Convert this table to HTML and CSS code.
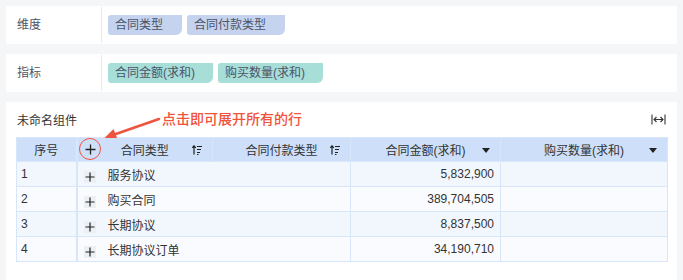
FILE: index.html
```html
<!DOCTYPE html>
<html lang="zh">
<head>
<meta charset="utf-8">
<link rel="stylesheet" href="styles.css">
</head>
<body>
<div class="page">
  <div class="panel">
    <div class="label">维度</div>
    <div class="tags">
      <span class="tag dim">合同类型</span>
      <span class="tag dim">合同付款类型</span>
    </div>
  </div>
  <div class="panel">
    <div class="label">指标</div>
    <div class="tags">
      <span class="tag met">合同金额(求和)</span>
      <span class="tag met">购买数量(求和)</span>
    </div>
  </div>
  <div class="widget">
    <div class="wtitle">
      <span>未命名组件</span>
      <svg class="fit" width="15" height="11" viewBox="0 0 15 11"><path d="M1 0.5v10M14 0.5v10M3 5.5h9M5.5 3l-2.5 2.5 2.5 2.5M9.5 3l2.5 2.5-2.5 2.5" fill="none" stroke="#333" stroke-width="1.1"/></svg>
    </div>
    <div class="note">点击即可展开所有的行</div>
    <svg class="arrow" width="70" height="30" viewBox="0 0 70 30"><path d="M58 6 L12 22" stroke="#ee5540" stroke-width="2.6" fill="none" stroke-linecap="round"/><path d="M2 26.5 L12.5 16 L16.5 26 Z" fill="#ee5540"/></svg>
    <table class="grid">
      <colgroup><col class="c1"><col class="c2"><col class="c3"><col class="c4"><col class="c5"></colgroup>
      <thead>
        <tr>
          <th class="first">序号</th>
          <th class="rel"><svg class="hplus" width="11" height="11" viewBox="0 0 11 11"><path d="M5.5 0.5v10M0.5 5.5h10" stroke="#222" stroke-width="1.3"/></svg><span class="ring"></span>合同类型<svg class="sort" width="10" height="10" viewBox="0 0 10 10"><path d="M2 9.5V1M0.2 2.8L2 0.8 3.8 2.8M5 1.5h5M5 4.5h4M5 7.5h3M5 9.5h1.5" fill="none" stroke="#222" stroke-width="1.2"/></svg></th>
          <th class="rel">合同付款类型<svg class="sort" width="10" height="10" viewBox="0 0 10 10"><path d="M2 9.5V1M0.2 2.8L2 0.8 3.8 2.8M5 1.5h5M5 4.5h4M5 7.5h3M5 9.5h1.5" fill="none" stroke="#222" stroke-width="1.2"/></svg></th>
          <th class="rel">合同金额(求和)<svg class="tri" width="8" height="5" viewBox="0 0 8 5"><path d="M0 0h8L4 5z" fill="#222"/></svg></th>
          <th class="rel">购买数量(求和)<svg class="tri" width="8" height="5" viewBox="0 0 8 5"><path d="M0 0h8L4 5z" fill="#222"/></svg></th>
        </tr>
      </thead>
      <tbody>
        <tr class="odd"><td class="first">1</td><td colspan="2"><span class="plus"><svg width="10" height="10" viewBox="0 0 10 10"><path d="M5 0.5v9M0.5 5h9" stroke="#222" stroke-width="1.2"/></svg></span>服务协议</td><td class="num">5,832,900</td><td></td></tr>
        <tr class="even"><td class="first">2</td><td colspan="2"><span class="plus"><svg width="10" height="10" viewBox="0 0 10 10"><path d="M5 0.5v9M0.5 5h9" stroke="#222" stroke-width="1.2"/></svg></span>购买合同</td><td class="num">389,704,505</td><td></td></tr>
        <tr class="odd"><td class="first">3</td><td colspan="2"><span class="plus"><svg width="10" height="10" viewBox="0 0 10 10"><path d="M5 0.5v9M0.5 5h9" stroke="#222" stroke-width="1.2"/></svg></span>长期协议</td><td class="num">8,837,500</td><td></td></tr>
        <tr class="even"><td class="first">4</td><td colspan="2"><span class="plus"><svg width="10" height="10" viewBox="0 0 10 10"><path d="M5 0.5v9M0.5 5h9" stroke="#222" stroke-width="1.2"/></svg></span>长期协议订单</td><td class="num">34,190,710</td><td></td></tr>
      </tbody>
    </table>
  </div>
</div>
</body>
</html>
```
FILE: styles.css
```css
html, body {
  margin: 0;
  background: #f5f6f8;
  font-family: "Liberation Sans", "Noto Sans CJK SC", sans-serif;
  font-size: 12px;
  color: #333;
}
.page {
  padding: 6px 6px 0 6px;
  display: flex;
  flex-direction: column;
  gap: 10px;
}
.panel {
  background: #fff;
  height: 38px;
  display: flex;
  align-items: center;
}
.label {
  width: 84px;
  padding-left: 11px;
  height: 36px;
  line-height: 36px;
  border-right: 1px solid #e6e8ec;
  color: #4f5563;
  font-size: 12px;
}
.tags {
  display: flex;
  gap: 5px;
  padding-left: 6px;
}
.tag {
  height: 20px;
  line-height: 20px;
  padding: 0 19px 0 7px;
  border-radius: 3px 0 6px 3px;
  color: #4b5468;
  font-size: 12px;
}
.dim { background: #c5d3ef; }
.met { background: #a8ded8; padding-right: 18px; }
.widget {
  background: #fff;
  height: 180px;
  padding: 0 10px;
  position: relative;
}
.wtitle {
  height: 35px;
  display: flex;
  align-items: center;
  justify-content: space-between;
  padding-left: 1px;
  padding-bottom: 1px;
  box-sizing: border-box;
}
.fit { margin-right: 1px; }
.note {
  position: absolute;
  left: 156px;
  top: 7px;
  color: #f2533c;
  font-size: 14px;
  line-height: 20px;
  font-weight: 500;
}
.arrow {
  position: absolute;
  left: 95px;
  top: 11px;
}
.grid {
  border-collapse: collapse;
  table-layout: fixed;
  width: 651px;
}
col.c1 { width: 60px; }
col.c2 { width: 136px; }
col.c3 { width: 138px; }
col.c4 { width: 150px; }
col.c5 { width: 167px; }
.grid th, .grid td {
  border: 1px solid #d8e6fa;
  height: 24px;
  padding: 0;
  font-weight: normal;
  white-space: nowrap;
}
.grid th {
  height: 23px;
  background: #cee0f9;
  text-align: center;
  color: #333;
}
.grid th.first { border-right: 2px solid #d8e6fa; }
.grid td.first { border-right: 2px solid #d8e6fa; padding-left: 4px; }
.rel { position: relative; }
.sort {
  position: absolute;
  right: 10px;
  top: 7px;
}
.tri {
  position: absolute;
  right: 10px;
  top: 10px;
}
.hplus {
  position: absolute;
  left: 7px;
  top: 6px;
}
.ring {
  position: absolute;
  left: 1px;
  top: 0px;
  width: 20px;
  height: 20px;
  border: 1.5px solid #ee5540;
  border-radius: 50%;
}
tr.odd td { background: #f2f7fe; }
tr.even td { background: #fafbfe; }
.plus {
  display: inline-flex;
  align-items: center;
  justify-content: center;
  width: 12px;
  height: 12px;
  background: #eceff3;
  margin: 0 12px 0 6px;
  vertical-align: -2px;
}
.num { text-align: right; padding-right: 6px !important; }
```
